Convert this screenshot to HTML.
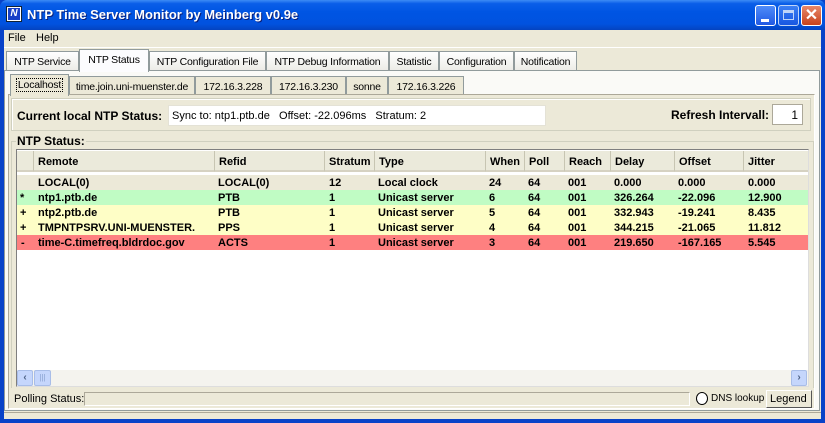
<!DOCTYPE html>
<html><head><meta charset="utf-8"><style>
*{margin:0;padding:0;box-sizing:border-box}
body{width:825px;height:423px;overflow:hidden;background:#0842c8;font-family:"Liberation Sans",sans-serif;font-size:11px;color:#000;position:relative}
.a{position:absolute}
#title{left:0;top:0;width:825px;height:30px;border-radius:7px 7px 0 0;background:linear-gradient(#3d8cf5 0%,#0a5ee8 12%,#0055e3 40%,#0152df 80%,#0443c0 100%)}
#title .t{left:27px;top:7px;color:#fff;font-weight:bold;font-size:13px;text-shadow:1px 1px #0a1e78;white-space:nowrap}
#client{left:4px;top:30px;width:817px;height:389px;background:#ece9d8}
.tab{position:absolute;height:20px;border:1px solid #919b9c;border-bottom:none;background:linear-gradient(#fff,#ecebe6);padding:4px 0 0 0;text-align:center;white-space:nowrap;font-size:10.5px;letter-spacing:-0.2px;overflow:hidden}
.sel{background:#fcfcfe;z-index:2}
.panel{position:absolute;border:1px solid #919b9c;background:#f7f7f2}
.box{position:absolute;background:#fff;border:1px solid #7f9db9}
.cell{position:absolute;white-space:nowrap;font-weight:bold;font-size:11px}
.row{position:absolute;left:17px;width:791px;height:15px}
.hd{position:absolute;top:151px;height:21px;background:#ebeadb;border-right:1px solid #c7c5b2;border-bottom:2px solid #d6d2c2;font-weight:bold;padding:5px 0 0 4px;white-space:nowrap}
</style></head><body>
<div id="title" class="a">
 <div class="a" style="left:6px;top:6px;width:16px;height:16px;background:#fff;border:1px solid #123">
  <div class="a" style="left:1px;top:1px;width:12px;height:12px;background:#1840c8;color:#fff;font-size:10px;font-weight:bold;font-style:italic;line-height:12px;text-align:center">N</div></div>
 <div class="a t">NTP Time Server Monitor by Meinberg v0.9e</div>
 <div class="a" style="left:755px;top:5px;width:21px;height:21px;border:1px solid #fff;border-radius:3px;background:linear-gradient(#4f8cf9,#2059e3)"><div class="a" style="left:5px;top:13px;width:8px;height:3px;background:#fff"></div></div>
 <div class="a" style="left:778px;top:5px;width:21px;height:21px;border:1px solid #fff;border-radius:3px;background:linear-gradient(#4f8cf9,#2059e3);opacity:.75"><div class="a" style="left:4px;top:4px;width:11px;height:10px;border:1px solid #fff;border-top-width:3px"></div></div>
 <div class="a" style="left:801px;top:5px;width:21px;height:21px;border:1px solid #fff;border-radius:3px;background:linear-gradient(#e8886a,#c8421c);color:#fff;font-weight:bold;font-size:16px;line-height:19px;text-align:center">✕</div>
</div>
<div id="client" class="a">
 <div class="a" style="left:0;top:0;width:817px;height:18px;border-bottom:1px solid #fff">
  <span class="a" style="left:4px;top:2px">File</span><span class="a" style="left:32px;top:2px">Help</span></div>
 <div class="tab" style="left:2px;top:21px;width:73px">NTP Service</div>
 <div class="tab sel" style="left:75px;top:19px;width:70px;height:23px">NTP Status</div>
 <div class="tab" style="left:145px;top:21px;width:117px">NTP Configuration File</div>
 <div class="tab" style="left:262px;top:21px;width:123px">NTP Debug Information</div>
 <div class="tab" style="left:385px;top:21px;width:50px">Statistic</div>
 <div class="tab" style="left:435px;top:21px;width:75px">Configuration</div>
 <div class="tab" style="left:510px;top:21px;width:63px">Notification</div>
 <div class="panel" style="left:0;top:40px;width:816px;height:341px;background:#fafaf7">
  <div class="tab sel" style="left:5px;top:3px;width:59px;height:22px;background:#ece9d8"><span style="border:1px dotted #000;padding:0 1px">Localhost</span></div>
  <div class="tab" style="left:64px;top:5px;width:126px;background:#ece9d8">time.join.uni-muenster.de</div>
  <div class="tab" style="left:190px;top:5px;width:76px;background:#ece9d8">172.16.3.228</div>
  <div class="tab" style="left:266px;top:5px;width:75px;background:#ece9d8">172.16.3.230</div>
  <div class="tab" style="left:341px;top:5px;width:42px;background:#ece9d8">sonne</div>
  <div class="tab" style="left:383px;top:5px;width:76px;background:#ece9d8">172.16.3.226</div>
  <div class="a" style="left:3px;top:23px;width:807px;height:315px;border:1px solid #aca899;border-right-color:#fff;border-bottom-color:#fff;background:#ece9d8"></div>
 </div>
</div>
<div class="a" style="left:11px;top:98px;width:800px;height:33px;border:1px solid #d0d0bf;box-shadow:inset 1px 1px #fff"></div>
<div class="a" style="left:17px;top:109px;font-weight:bold;font-size:12px">Current local NTP Status:</div>
<div class="box" style="left:168px;top:105px;width:378px;height:21px;border-color:#e4e2d6;padding:4px 0 0 3px;white-space:nowrap">Sync to: ntp1.ptb.de&nbsp;&nbsp; Offset: -22.096ms&nbsp;&nbsp; Stratum: 2</div>
<div class="a" style="left:671px;top:108px;font-weight:bold;font-size:12px">Refresh Intervall:</div>
<div class="box" style="left:772px;top:104px;width:31px;height:21px;border-color:#aca899;text-align:right;padding:3px 4px 0 0;font-size:12px">1</div>
<div class="a" style="left:11px;top:141px;width:803px;height:247px;border:1px solid #d0d0bf;border-bottom:none"></div>
<div class="a" style="left:16px;top:134px;background:#ece9d8;font-weight:bold;font-size:12px;padding:0 1px">NTP Status:</div>
<div class="a" style="left:16px;top:149px;width:793px;height:238px;background:#fff;border:1px solid #7f7f7f;border-right-color:#ddd;border-bottom-color:#ddd"></div>
<div class="hd" style="left:17px;width:17px"></div>
<div class="hd" style="left:34px;width:181px">Remote</div>
<div class="hd" style="left:215px;width:110px">Refid</div>
<div class="hd" style="left:325px;width:50px">Stratum</div>
<div class="hd" style="left:375px;width:111px">Type</div>
<div class="hd" style="left:486px;width:39px">When</div>
<div class="hd" style="left:525px;width:40px">Poll</div>
<div class="hd" style="left:565px;width:46px">Reach</div>
<div class="hd" style="left:611px;width:64px">Delay</div>
<div class="hd" style="left:675px;width:69px">Offset</div>
<div class="hd" style="left:744px;width:64px;border-right:none">Jitter</div>
<div class="row" style="top:175px;background:#ece9d8"></div>
<div class="row" style="top:190px;background:#c0fcc4"></div>
<div class="row" style="top:205px;background:#fefec6"></div>
<div class="row" style="top:220px;background:#fefec6"></div>
<div class="row" style="top:235px;background:#fe8080"></div>
<div style="position:absolute;left:0;top:177px">
 <div class="cell" style="left:20px;top:15px">*</div><div class="cell" style="left:20px;top:30px">+</div><div class="cell" style="left:20px;top:45px">+</div><div class="cell" style="left:21px;top:60px">-</div>
 <div class="cell" style="left:38px;top:0">LOCAL(0)</div><div class="cell" style="left:38px;top:15px">ntp1.ptb.de</div><div class="cell" style="left:38px;top:30px">ntp2.ptb.de</div><div class="cell" style="left:38px;top:45px">TMPNTPSRV.UNI-MUENSTER.</div><div class="cell" style="left:38px;top:60px">time-C.timefreq.bldrdoc.gov</div>
 <div class="cell" style="left:218px;top:0">LOCAL(0)</div><div class="cell" style="left:218px;top:15px">PTB</div><div class="cell" style="left:218px;top:30px">PTB</div><div class="cell" style="left:218px;top:45px">PPS</div><div class="cell" style="left:218px;top:60px">ACTS</div>
 <div class="cell" style="left:329px;top:0">12</div><div class="cell" style="left:329px;top:15px">1</div><div class="cell" style="left:329px;top:30px">1</div><div class="cell" style="left:329px;top:45px">1</div><div class="cell" style="left:329px;top:60px">1</div>
 <div class="cell" style="left:378px;top:0">Local clock</div><div class="cell" style="left:378px;top:15px">Unicast server</div><div class="cell" style="left:378px;top:30px">Unicast server</div><div class="cell" style="left:378px;top:45px">Unicast server</div><div class="cell" style="left:378px;top:60px">Unicast server</div>
 <div class="cell" style="left:489px;top:0">24</div><div class="cell" style="left:489px;top:15px">6</div><div class="cell" style="left:489px;top:30px">5</div><div class="cell" style="left:489px;top:45px">4</div><div class="cell" style="left:489px;top:60px">3</div>
 <div class="cell" style="left:528px;top:0">64</div><div class="cell" style="left:528px;top:15px">64</div><div class="cell" style="left:528px;top:30px">64</div><div class="cell" style="left:528px;top:45px">64</div><div class="cell" style="left:528px;top:60px">64</div>
 <div class="cell" style="left:568px;top:0">001</div><div class="cell" style="left:568px;top:15px">001</div><div class="cell" style="left:568px;top:30px">001</div><div class="cell" style="left:568px;top:45px">001</div><div class="cell" style="left:568px;top:60px">001</div>
 <div class="cell" style="left:614px;top:0">0.000</div><div class="cell" style="left:614px;top:15px">326.264</div><div class="cell" style="left:614px;top:30px">332.943</div><div class="cell" style="left:614px;top:45px">344.215</div><div class="cell" style="left:614px;top:60px">219.650</div>
 <div class="cell" style="left:678px;top:0">0.000</div><div class="cell" style="left:678px;top:15px">-22.096</div><div class="cell" style="left:678px;top:30px">-19.241</div><div class="cell" style="left:678px;top:45px">-21.065</div><div class="cell" style="left:678px;top:60px">-167.165</div>
 <div class="cell" style="left:748px;top:0">0.000</div><div class="cell" style="left:748px;top:15px">12.900</div><div class="cell" style="left:748px;top:30px">8.435</div><div class="cell" style="left:748px;top:45px">11.812</div><div class="cell" style="left:748px;top:60px">5.545</div>
</div>
<div class="a" style="left:17px;top:370px;width:791px;height:16px;background:#f4f3ee"></div>
<div class="a" style="left:17px;top:370px;width:16px;height:16px;background:#c5d6fc;border:1px solid #a8bde8;border-radius:2px;color:#4d6185;font-size:10px;font-weight:bold;text-align:center;line-height:14px">‹</div>
<div class="a" style="left:34px;top:370px;width:17px;height:16px;background:#c5d6fc;border:1px solid #a8bde8;border-radius:2px;color:#8aa0d0;font-size:8px;text-align:center;line-height:14px">|||</div>
<div class="a" style="left:791px;top:370px;width:16px;height:16px;background:#c5d6fc;border:1px solid #a8bde8;border-radius:2px;color:#4d6185;font-size:10px;font-weight:bold;text-align:center;line-height:14px">›</div>
<div class="a" style="left:14px;top:393px;white-space:nowrap">Polling Status:</div>
<div class="a" style="left:84px;top:392px;width:606px;height:14px;border:1px solid #aca899;border-right-color:#fff;border-bottom-color:#fff"></div>
<div class="a" style="left:696px;top:392px;width:12px;height:13px;border:1px solid #000;border-radius:50%;background:#fff"></div>
<div class="a" style="left:711px;top:393px;font-size:10px;white-space:nowrap">DNS lookup</div>
<div class="a" style="left:766px;top:390px;width:46px;height:18px;border:1px solid #fff;border-right-color:#555;border-bottom-color:#555;padding:2px 0 0 3px;font-size:11px">Legend</div>
<div class="a" style="left:4px;top:412px;width:817px;height:7px;border-top:1px solid #aca899;background:#ece9d8"></div>
</body></html>
